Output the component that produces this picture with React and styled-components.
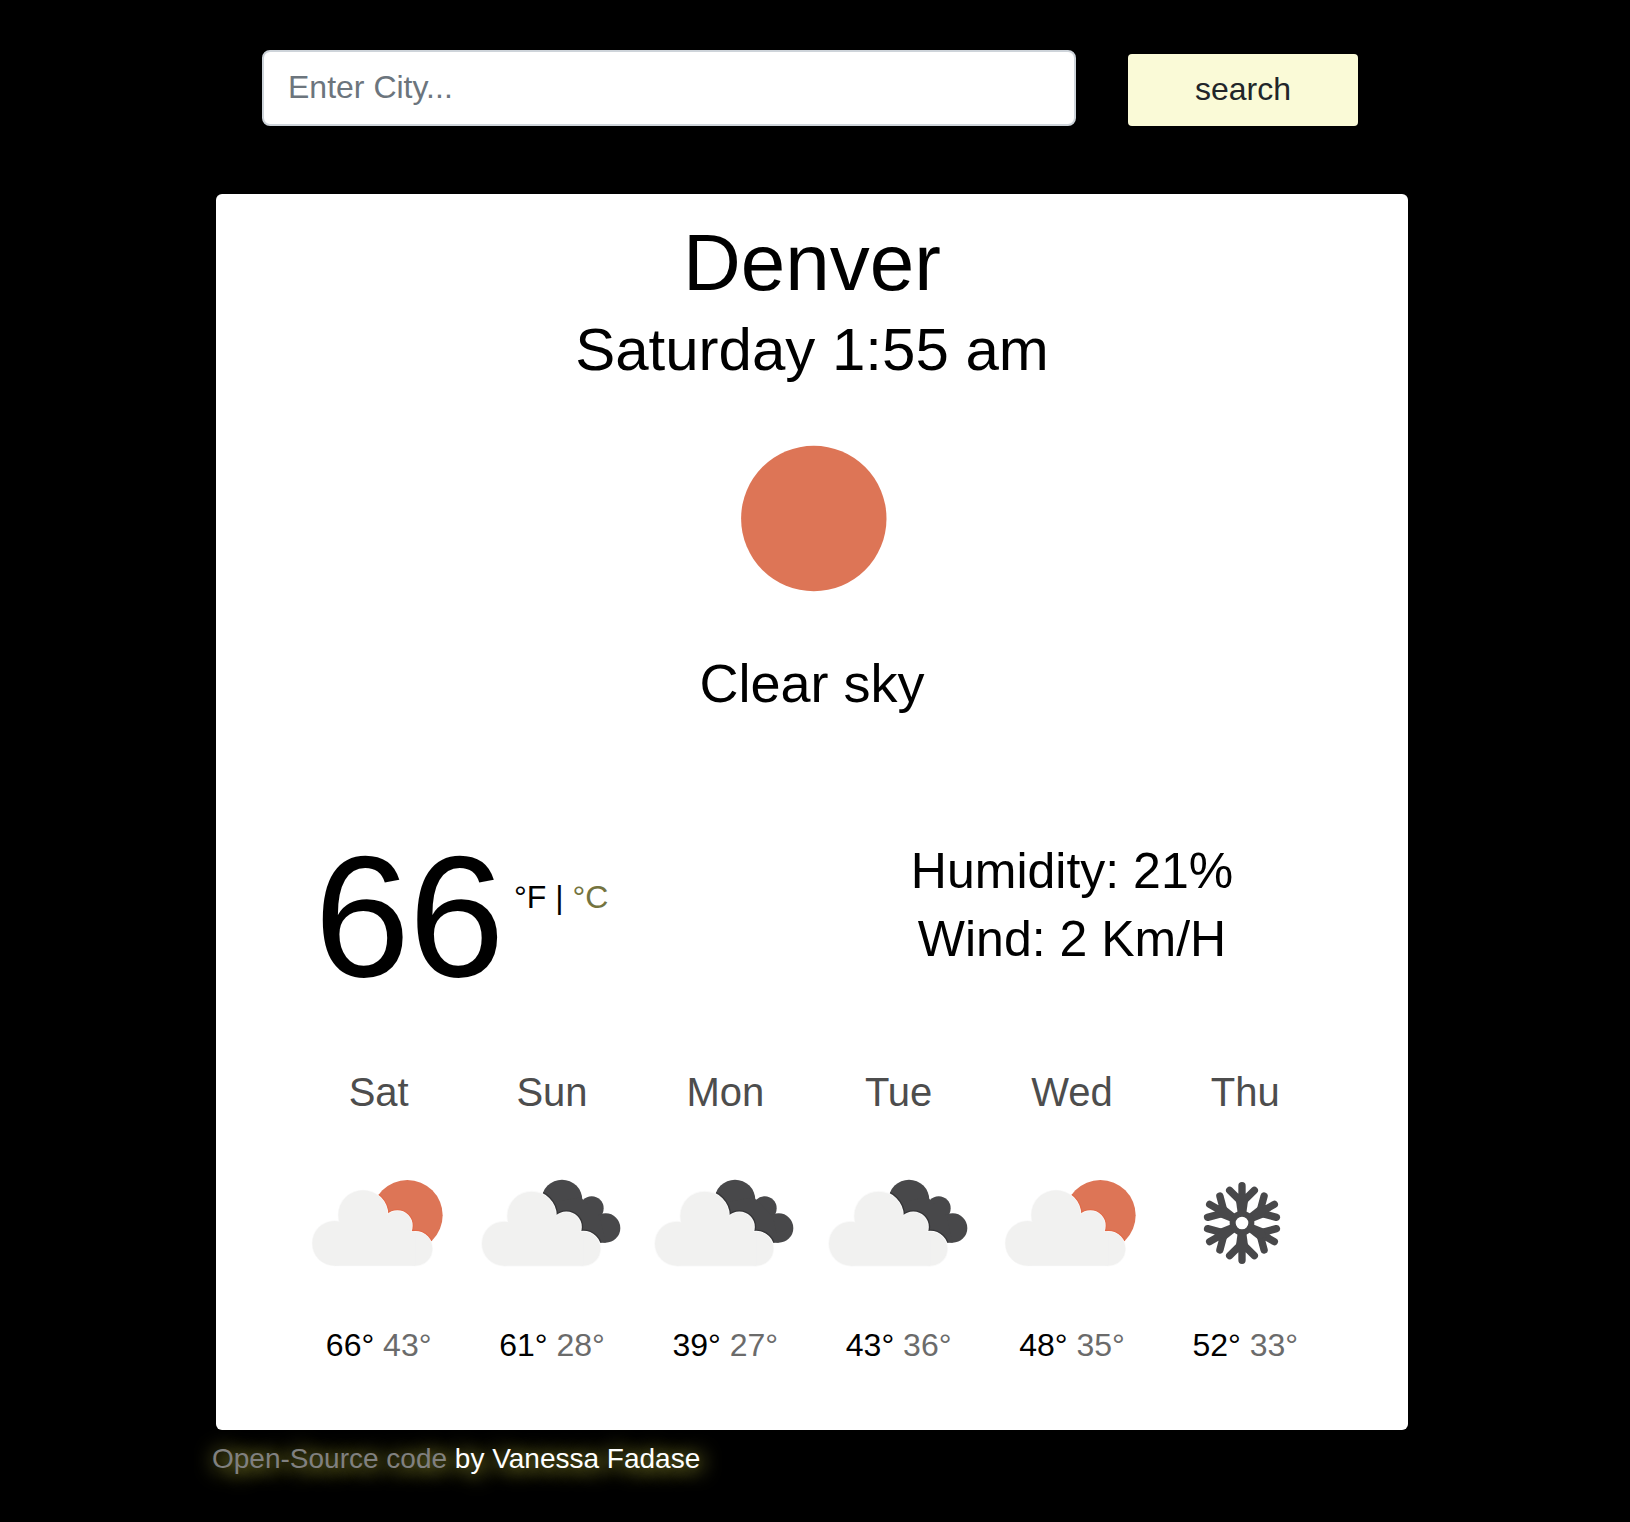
import React from "react";
import styled, { createGlobalStyle } from "styled-components";

const GlobalStyle = createGlobalStyle`
  * { box-sizing: border-box; }
  body {
    margin: 0;
    min-height: 1522px;
    background: #000;
    color: #000;
    font-family: "Liberation Sans", Arial, sans-serif;
  }
`;

const Page = styled.main`
  width: 1192px;
  margin: 0 0 0 216px;
  padding-top: 50px;
`;

const SearchForm = styled.form`
  display: flex;
  align-items: flex-end;
  gap: 52px;
  height: 76px;
  margin: 0 50px 68px 46px;
`;

const CityInput = styled.input`
  flex: 1;
  height: 76px;
  padding: 0 24px 2px;
  border: 2px solid #ced4da;
  border-radius: 8px;
  background: #fff;
  font: 32px "Liberation Sans", Arial, sans-serif;
  color: #212529;
  outline: none;
  &::placeholder { color: #6c757d; opacity: 1; }
`;

const SearchButton = styled.button`
  width: 230px;
  height: 72px;
  padding: 0 0 2px;
  border: 0;
  border-radius: 4px;
  background: #fafad7;
  color: #212529;
  font: 32px "Liberation Sans", Arial, sans-serif;
`;

const Card = styled.section`
  height: 1236px;
  padding: 21px 76px 0;
  border-radius: 6px;
  background: #fff;
`;

const Overview = styled.header`
  display: flex;
  flex-direction: column;
  align-items: center;
`;

const City = styled.h1`
  margin: 0;
  font-size: 80px;
  font-weight: 400;
  line-height: 96px;
`;

const LocalTime = styled.h2`
  margin: 3px 0 57px;
  font-size: 60px;
  font-weight: 400;
  line-height: 72px;
`;

const Description = styled.p`
  margin: 58px 0 0;
  font-size: 54px;
  line-height: 64px;
`;

const Icon = styled.svg`
  display: block;
  flex: none;
`;

const Current = styled.div`
  display: grid;
  grid-template-columns: 1fr 1fr;
  height: 170px;
  margin-top: 117px;
`;

const Temperature = styled.div`
  display: flex;
  padding-left: 22px;
  font-size: 173px;
  letter-spacing: -1.7px;
  line-height: 168px;
`;

const Units = styled.div`
  margin: 45px 0 0 11px;
  font-size: 32px;
  letter-spacing: 0;
  line-height: 40px;
`;

const UnitLink = styled.a`
  color: #74743f;
`;

const Conditions = styled.div`
  padding-top: 5px;
  text-align: center;
  font-size: 50px;
  line-height: 68px;
`;

const Forecast = styled.div`
  display: grid;
  grid-template-columns: repeat(6, 1fr);
  margin-top: 66px;
`;

const Day = styled.div`
  display: flex;
  flex-direction: column;
  align-items: center;
`;

const DayName = styled.div`
  margin-bottom: 57px;
  color: #4d4d4d;
  font-size: 40px;
  line-height: 48px;
`;

const Range = styled.div`
  margin-top: 48px;
  font-size: 32px;
  line-height: 48px;
`;

const Low = styled.span`
  color: #6b6b6b;
`;

const Credit = styled.footer`
  margin: 8px 0 0 -4px;
  color: #fff;
  font-size: 28px;
  line-height: 42px;
  text-shadow: 2px 2px 20px #f0f050;
`;

const SourceLink = styled.a`
  color: #808080;
`;

function SunIcon() {
  return (
    <Icon width="150" height="150" viewBox="0 0 150 150">
      <circle cx="76.8" cy="75.5" r="72.7" fill="#dd7556" />
    </Icon>
  );
}

function FewClouds() {
  const id = React.useId();
  const body = (
    <>
      <circle cx="133" cy="550" r="67" />
      <circle cx="218" cy="465" r="74" />
      <circle cx="321" cy="497" r="44" />
      <circle cx="375" cy="566" r="51" />
      <path d="M133 617V500H330L375 520V617Z" />
    </>
  );
  return (
    <Icon width="160" height="100" viewBox="26 339 480 300">
      <clipPath id={id}><circle cx="351" cy="466" r="106" /></clipPath>
      <circle cx="351" cy="466" r="106" fill="#dd7556" />
      <g clipPath={`url(#${id})`} fill="#e26a48" stroke="#e26a48" strokeWidth="11">{body}</g>
      <g fill="#fafafa" stroke="#fafafa" strokeWidth="4">{body}</g>
      <g fill="#f1f1f0">{body}</g>
    </Icon>
  );
}

function BrokenClouds() {
  const id = React.useId();
  const body = (
    <>
      <circle cx="642" cy="551" r="66" />
      <circle cx="725" cy="468" r="73" />
      <circle cx="829" cy="501" r="44" />
      <circle cx="880" cy="566" r="51" />
      <path d="M642 617V500H838L880 520V617Z" />
    </>
  );
  const back = (
    <>
      <circle cx="816" cy="420" r="61" />
      <circle cx="905" cy="445" r="36" />
      <circle cx="947" cy="504" r="44" />
      <path d="M770 430L872 412L930 470L947 548L900 548Z" />
    </>
  );
  return (
    <Icon width="160" height="100" viewBox="546 339 480 300">
      <clipPath id={id}>{back}</clipPath>
      <g fill="#48484a">{back}</g>
      <g clipPath={`url(#${id})`} fill="#353537" stroke="#353537" strokeWidth="13">{body}</g>
      <g fill="#fafafa" stroke="#fafafa" strokeWidth="5">{body}</g>
      <g fill="#f1f1f0">{body}</g>
    </Icon>
  );
}

function Snow() {
  return (
    <Icon width="160" height="100" viewBox="526 339 480 300">
      <g transform="translate(757 489)" fill="none" stroke="#48484a" strokeWidth="22" strokeLinecap="round">
        {[0, 60, 120, 180, 240, 300].map((angle) => (
          <g key={angle} transform={`rotate(${angle})`}>
            <path d="M0 -32V-112M-37 -98L0 -61L37 -98" />
            <path d="M-18 -66L0 -84L18 -66L13 -30H-13Z" fill="#48484a" stroke="none" />
          </g>
        ))}
        <circle r="28" strokeWidth="18" />
      </g>
    </Icon>
  );
}

const days = [
  { name: "Sat", icon: FewClouds, high: 66, low: 43 },
  { name: "Sun", icon: BrokenClouds, high: 61, low: 28 },
  { name: "Mon", icon: BrokenClouds, high: 39, low: 27 },
  { name: "Tue", icon: BrokenClouds, high: 43, low: 36 },
  { name: "Wed", icon: FewClouds, high: 48, low: 35 },
  { name: "Thu", icon: Snow, high: 52, low: 33 },
];

export default function App() {
  return (
    <>
      <GlobalStyle />
      <Page>
        <SearchForm onSubmit={(event) => event.preventDefault()}>
          <CityInput type="text" placeholder="Enter City..." />
          <SearchButton type="submit">search</SearchButton>
        </SearchForm>
        <Card>
          <Overview>
            <City>Denver</City>
            <LocalTime>Saturday 1:55 am</LocalTime>
            <SunIcon />
            <Description>Clear sky</Description>
          </Overview>
          <Current>
            <Temperature>
              66
              <Units>°F | <UnitLink>°C</UnitLink></Units>
            </Temperature>
            <Conditions>
              <div>Humidity: 21%</div>
              <div>Wind: 2 Km/H</div>
            </Conditions>
          </Current>
          <Forecast>
            {days.map(({ name, icon: DayIcon, high, low }) => (
              <Day key={name}>
                <DayName>{name}</DayName>
                <DayIcon />
                <Range>{high}° <Low>{low}°</Low></Range>
              </Day>
            ))}
          </Forecast>
        </Card>
        <Credit><SourceLink>Open-Source code</SourceLink> by Vanessa Fadase</Credit>
      </Page>
    </>
  );
}
